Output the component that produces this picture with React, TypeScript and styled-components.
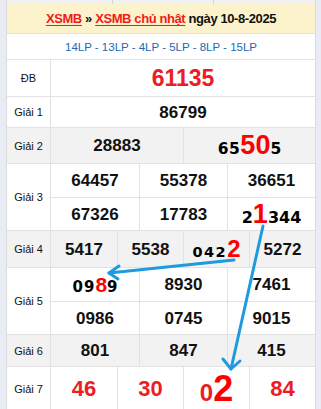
import styled, { createGlobalStyle } from "styled-components";

const GlobalStyle = createGlobalStyle`
  html, body {
    margin: 0;
    padding: 0;
    background: #e9ecf4;
  }
  * {
    box-sizing: border-box;
  }
`;

const Page = styled.div`
  position: relative;
  width: 321px;
  height: 409px;
  overflow: hidden;
  padding: 0 5px 0 6px;
  font-family: "Liberation Sans", Arial, sans-serif;
`;

const TopStrip = styled.div`
  display: grid;
  grid-template-columns: 105px 101px 1fr;
  height: 4px;
  background: #f1f1f1;
  border-left: 1px solid #dcdcdc;
  border-right: 1px solid #dcdcdc;

  & > div + div {
    border-left: 1px solid #d6d6d6;
  }
`;

const Table = styled.div`
  border-left: 1px solid #dcdcdc;
  border-right: 1px solid #dcdcdc;
  background: #fff;
`;

const Title = styled.div`
  height: 29px;
  display: flex;
  align-items: center;
  justify-content: center;
  background: #fcf2cb;
  font-size: 13px;
  font-weight: bold;
  letter-spacing: -0.4px;
  color: #111;
  white-space: nowrap;
`;

const TitleLink = styled.a`
  color: #f01c1c;
  text-decoration: underline;
  text-underline-offset: 2px;
`;

const Codes = styled.div`
  height: 26px;
  display: flex;
  align-items: center;
  justify-content: center;
  font-size: 11.5px;
  color: #2268b4;
  border-top: 1px solid #e2e2e2;
`;

const Row = styled.div<{ $h: number; $grey?: boolean }>`
  display: grid;
  grid-template-columns: 44px 1fr;
  height: ${(p) => p.$h}px;
  border-top: 1px solid #e2e2e2;
  background: ${(p) => (p.$grey ? "#f2f2f2" : "#fff")};
`;

const Label = styled.div`
  display: flex;
  align-items: center;
  justify-content: center;
  font-size: 11px;
  color: #111;
  border-right: 1px solid #e2e2e2;
`;

const Cells = styled.div<{ $cols: number; $rows?: number }>`
  display: grid;
  grid-template-columns: repeat(${(p) => p.$cols}, 1fr);
  grid-template-rows: repeat(${(p) => p.$rows ?? 1}, 1fr);
`;

const Cell = styled.div<{ $left?: boolean; $top?: boolean }>`
  display: flex;
  align-items: center;
  justify-content: center;
  white-space: nowrap;
  border-left: ${(p) => (p.$left ? "1px solid #e2e2e2" : "none")};
  border-top: ${(p) => (p.$top ? "1px solid #e2e2e2" : "none")};
`;

const Num = styled.span<{ $size?: number; $red?: boolean }>`
  font-weight: bold;
  font-size: ${(p) => p.$size ?? 17}px;
  line-height: 1;
  color: ${(p) => (p.$red ? "#ec1c24" : "#111")};
`;

/* the plain digits around a highlighted pair are set in a wider face */
const Wide = styled.span<{ $size: number; $spacing?: number }>`
  font-family: "DejaVu Sans", sans-serif;
  font-weight: bold;
  font-size: ${(p) => p.$size}px;
  letter-spacing: ${(p) => p.$spacing ?? 0}px;
  line-height: 1;
  color: #000;
`;

const Hl = styled.span<{ $size: number }>`
  font-family: "Liberation Sans", Arial, sans-serif;
  font-weight: bold;
  font-size: ${(p) => p.$size}px;
  line-height: 1;
  color: #ff0000;
`;

const Arrows = styled.svg`
  position: absolute;
  top: 0;
  left: 0;
  pointer-events: none;
`;

type Prize = { label: string; cols: number; rows?: number; h: number; grey?: boolean; items: React.ReactNode[] };

const prizes: Prize[] = [
  { label: "Giải 1", cols: 1, h: 31, items: [<Num>86799</Num>] },
  {
    label: "Giải 2",
    cols: 2,
    h: 36,
    grey: true,
    items: [
      <Num>28883</Num>,
      <span>
        <Wide $size={15.5} $spacing={0.5}>65</Wide>
        <Hl $size={27}>50</Hl>
        <Wide $size={15.5}>5</Wide>
      </span>,
    ],
  },
  {
    label: "Giải 3",
    cols: 3,
    rows: 2,
    h: 67,
    items: [
      <Num>64457</Num>,
      <Num>55378</Num>,
      <Num>36651</Num>,
      <Num>67326</Num>,
      <Num>17783</Num>,
      <span>
        <Wide $size={16}>2</Wide>
        <Hl $size={27}>1</Hl>
        <Wide $size={16}>344</Wide>
      </span>,
    ],
  },
  {
    label: "Giải 4",
    cols: 4,
    h: 37,
    grey: true,
    items: [
      <Num>5417</Num>,
      <Num>5538</Num>,
      <span>
        <Wide $size={14.5} $spacing={1.5}>042</Wide>
        <Hl $size={24}>2</Hl>
      </span>,
      <Num>5272</Num>,
    ],
  },
  {
    label: "Giải 5",
    cols: 3,
    rows: 2,
    h: 67,
    items: [
      <span>
        <Wide $size={15} $spacing={1}>09</Wide>
        <Hl $size={21}>8</Hl>
        <Wide $size={15}>9</Wide>
      </span>,
      <Num>8930</Num>,
      <Num>7461</Num>,
      <Num>0986</Num>,
      <Num>0745</Num>,
      <Num>9015</Num>,
    ],
  },
  { label: "Giải 6", cols: 3, h: 32, grey: true, items: [<Num>801</Num>, <Num>847</Num>, <Num>415</Num>] },
  {
    label: "Giải 7",
    cols: 4,
    h: 44,
    items: [
      <Num $size={22} $red>46</Num>,
      <Num $size={22} $red>30</Num>,
      <Num $size={24} $red>
        0<Hl $size={36}>2</Hl>
      </Num>,
      <Num $size={22} $red>84</Num>,
    ],
  },
];

export default function App() {
  return (
    <>
      <GlobalStyle />
      <Page>
        <TopStrip>
          <div />
          <div />
          <div />
        </TopStrip>
        <Table>
          <Title>
            <TitleLink>XSMB</TitleLink>&nbsp;»&nbsp;<TitleLink>XSMB chủ nhật</TitleLink>&nbsp;ngày 10-8-2025
          </Title>
          <Codes>14LP - 13LP - 4LP - 5LP - 8LP - 15LP</Codes>
          <Row $h={37}>
            <Label>ĐB</Label>
            <Cells $cols={1}>
              <Cell>
                <Num $size={23} $red>61135</Num>
              </Cell>
            </Cells>
          </Row>
          {prizes.map((p) => (
            <Row key={p.label} $h={p.h} $grey={p.grey}>
              <Label>{p.label}</Label>
              <Cells $cols={p.cols} $rows={p.rows}>
                {p.items.map((it, i) => (
                  <Cell key={i} $left={i % p.cols !== 0} $top={i >= p.cols}>
                    {it}
                  </Cell>
                ))}
              </Cells>
            </Row>
          ))}
        </Table>
        <Arrows width="321" height="409" viewBox="0 0 321 409">
          <g stroke="#1e9be0" strokeWidth="3" strokeLinecap="round" strokeLinejoin="round" fill="none">
            <line x1="234" y1="260" x2="109" y2="273" />
            <polyline points="119,266 109,273 118,279" />
            <line x1="263" y1="226" x2="231" y2="369" />
            <polyline points="223,359 231,369 240,361" />
          </g>
        </Arrows>
      </Page>
    </>
  );
}
